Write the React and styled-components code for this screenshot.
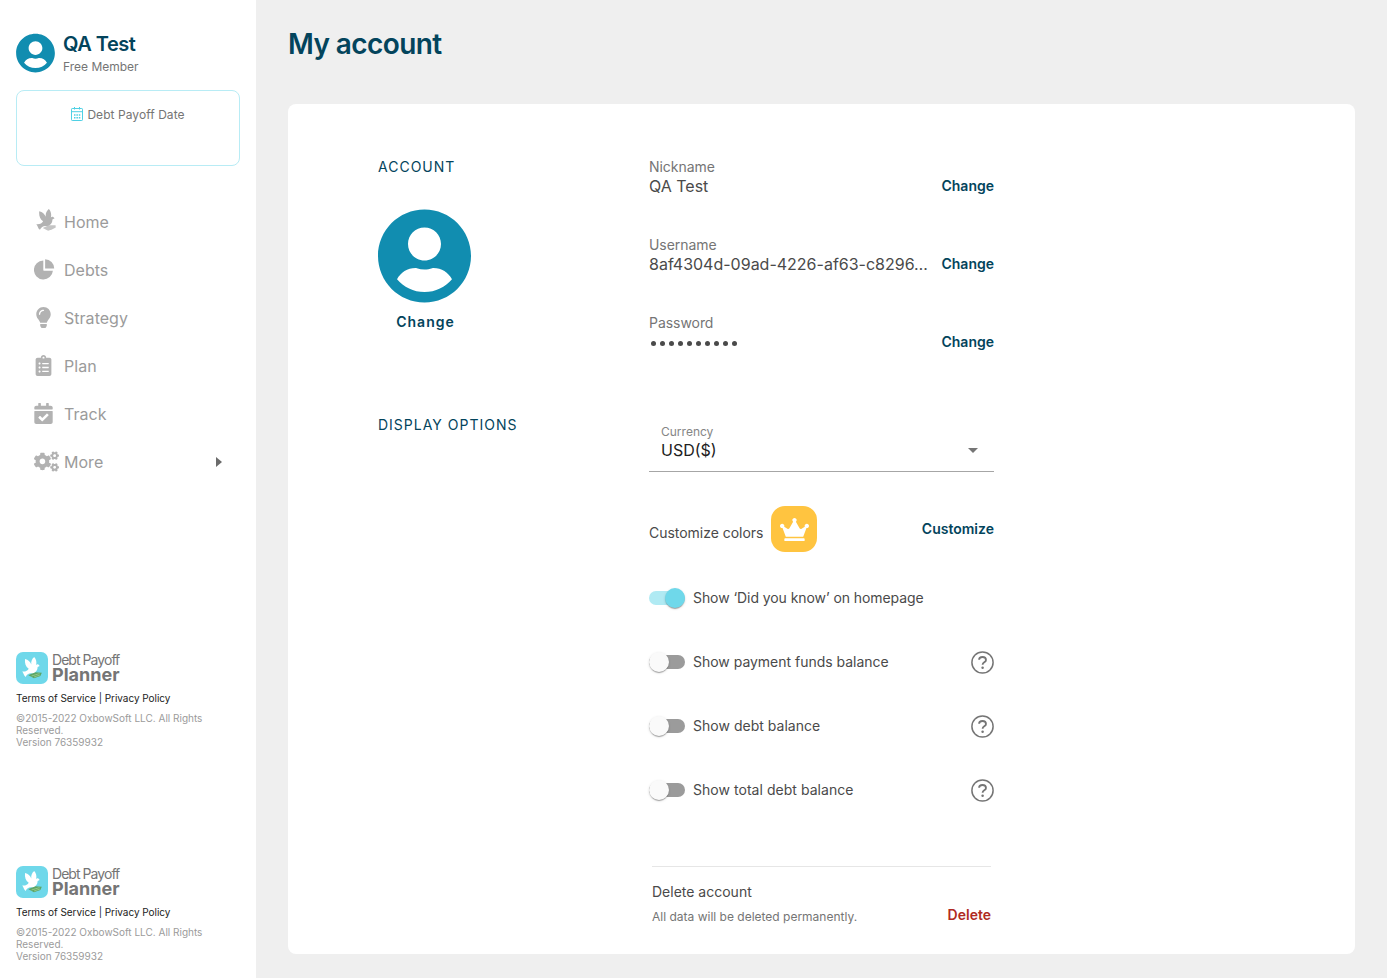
import React from "react";
import styled, { createGlobalStyle } from "styled-components";
import {
  FaUserCircle, FaLightbulb, FaClipboardList, FaCalendarCheck, FaCogs, FaCrown,
} from "react-icons/fa";

const Global = createGlobalStyle`
  * { box-sizing: border-box; }
  body { margin: 0; background: #efefef; font-family: Inter, "Liberation Sans", sans-serif; }
  button { font-family: inherit; border: 0; background: none; padding: 0; cursor: pointer; }
  svg { display: block; flex: none; }
  p, h1, h2 { margin: 0; }
`;

const Page = styled.div`display: flex; height: 978px; overflow: hidden;`;

const Sidebar = styled.aside`
  width: 256px; flex: none; background: #fff; padding: 33px 16px 0;
  display: flex; flex-direction: column;
`;
const Profile = styled.div`
  display: flex; height: 57px; gap: 8px;
  > svg { color: #118db0; width: 39px; height: 40px; }
`;
const ProfileName = styled.div`
  font-size: 20px; line-height: 24px; font-weight: 600; color: #03445c; letter-spacing: -0.5px; margin-top: -1px;
`;
const ProfilePlan = styled.div`font-size: 12px; line-height: 20px; color: #757575; margin-top: 1px;`;
const DateCard = styled.div`
  height: 76px; border: 1px solid #b8ecf5; border-radius: 8px; padding-top: 15px;
  display: flex; justify-content: center; align-items: flex-start; gap: 4px;
  font-size: 12px; line-height: 18px; color: #757575; letter-spacing: 0.06px;
  > svg { margin-top: 1px; }
`;
const Nav = styled.nav`margin-top: 32px; display: flex; flex-direction: column;`;
const NavItem = styled.a`
  height: 48px; display: flex; align-items: center; padding-left: 16px;
  font-size: 16px; color: #9b9b9b; letter-spacing: 0.03px;
`;
const NavIcon = styled.span`
  width: 32px; display: flex; color: #b2b2b2; padding-bottom: ${(p) => p.$lift || 0}px;
  > svg { margin-left: ${(p) => p.$inset}px; }
`;
const NavArrow = styled.span`
  margin-left: auto; margin-right: 18px;
  border-left: 6px solid #6b6b6b; border-top: 5px solid transparent; border-bottom: 5px solid transparent;
`;

const Footer = styled.footer`margin-top: ${(p) => p.$top}px; height: 98px;`;
const Brand = styled.div`display: flex; gap: 4px; height: 32px;`;
const BrandName = styled.div`
  font-size: 14px; line-height: 15px; color: #757575; letter-spacing: -0.95px;
  strong { display: block; font-size: 18px; line-height: 16px; font-weight: 700; letter-spacing: 0; }
`;
const Legal = styled.div`margin-top: 8px; font-size: 10px; line-height: 12px; color: #222; letter-spacing: -0.04px;`;
const Copyright = styled.div`margin-top: 8px; font-size: 10px; line-height: 12px; color: #9b9b9b;`;

const Main = styled.main`flex: 1; padding: 24px 32px;`;
const Title = styled.h1`
  font-size: 28px; line-height: 40px; height: 80px; font-weight: 600; letter-spacing: -0.6px; color: #03445c;
`;
const Card = styled.div`
  background: #fff; border-radius: 8px; height: 850px; padding: 54px 90px 0;
`;
const Section = styled.section`display: flex; height: ${(p) => p.$height}px;`;
const Side = styled.div`width: 271px; flex: none;`;
const Heading = styled.h2`font-size: 14px; line-height: 18px; font-weight: 400; letter-spacing: 1px; color: #03445c;`;
const Avatar = styled.div`
  width: 93px; margin-top: 32px; display: flex; flex-direction: column; align-items: center; gap: 8px;
  > svg { color: #118db0; width: 93px; height: 96px; }
  > button { padding-left: 2px; }
`;
const Action = styled.button`
  font-size: 14px; line-height: 20px; font-weight: 600; letter-spacing: ${(p) => (p.$wide ? "1px" : "0")};
  color: ${(p) => (p.$danger ? "#b02a22" : "#03445c")};
`;
const Fields = styled.div`width: 345px; display: flex; flex-direction: column; gap: ${(p) => p.$gap || 0}px;`;
const Field = styled.div`display: flex; justify-content: space-between; align-items: flex-end; height: 38px;`;
const FieldBody = styled.div`width: 282px;`;
const Label = styled.div`font-size: 14px; line-height: 18px; color: #757575; letter-spacing: -0.05px;`;
const Value = styled.div`font-size: 16px; line-height: 20px; color: #4a4a4a; white-space: nowrap;`;
const Dots = styled.div`display: flex; gap: 4px; padding: 9px 0 6px 2px;`;
const Dot = styled.i`width: 5px; height: 5px; border-radius: 50%; background: #4a4a4a;`;

const Select = styled.div`
  height: 56px; border-bottom: 1px solid #a6a6a6; padding: 9px 16px 0 12px;
  display: flex; justify-content: space-between;
`;
const SelectLabel = styled.div`font-size: 12px; line-height: 14px; color: #858585;`;
const SelectValue = styled.div`font-size: 16px; line-height: 23px; color: #212121;`;
const Caret = styled.span`
  margin-top: 23px; height: 5px;
  border-top: 5px solid #757575; border-left: 5px solid transparent; border-right: 5px solid transparent;
`;
const ColorRow = styled.div`
  display: flex; align-items: center; height: 46px; margin-top: 34px; margin-bottom: 14px;
  font-size: 14px; color: #4a4a4a;
  > button { margin-left: auto; }
`;
const ColorText = styled.span`width: 114px; white-space: nowrap; padding-top: 6px; letter-spacing: -0.03px;`;
const Crown = styled.span`
  width: 46px; height: 46px; border-radius: 14px; background: #ffc440; color: #fff; margin-left: 8px;
  display: grid; place-items: center;
`;
const ToggleRow = styled.div`
  height: 64px; display: flex; align-items: center; font-size: 14px; color: #4a4a4a;
  > svg { margin-left: auto; }
`;
const ToggleText = styled.span`padding-bottom: 2px; letter-spacing: ${(p) => p.$spacing}px;`;
const Track = styled.span`
  width: 36px; height: 14px; border-radius: 7px; margin-right: 8px; display: flex; align-items: center;
  justify-content: ${(p) => (p.$on ? "flex-end" : "flex-start")};
  background: ${(p) => (p.$on ? "#b0eaf3" : "#9b9b9b")};
`;
const Thumb = styled.span`
  width: 20px; height: 20px; flex: none; border-radius: 50%; background: ${(p) => (p.$on ? "#6fd8ea" : "#fafafa")};
  box-shadow: 0 2px 1px -1px rgba(0,0,0,.2), 0 1px 1px rgba(0,0,0,.14), 0 1px 3px rgba(0,0,0,.12);
`;
const DeleteBox = styled.div`
  margin: 44px 3px 0; border-top: 1px solid #e6e6e6; padding-top: 15px;
  display: flex; justify-content: space-between;
  > button { align-self: flex-start; margin-top: 23px; }
`;
const DeleteTitle = styled.div`font-size: 14px; line-height: 20px; color: #4a4a4a;`;
const DeleteNote = styled.div`font-size: 12px; line-height: 18px; margin-top: 6px; color: #757575;`;

const BIRD = "M9 7C8.6 11.2 9.6 14.6 12.7 16.7 11.6 18.8 9.6 19.8 6.2 19.5 7.6 20.8 7.7 23.6 9.7 24.9 10.8 22.6 12.4 21.3 15 21.3 19.4 21.2 21.6 18.6 21.6 14.9L23.7 13.9 22.4 12.6C21.7 12.1 20.7 12.3 20.1 13 20.9 10 20.2 7.2 18.2 4.9 15.8 6.9 14.9 9.4 15.3 12.4 14.2 9.8 12.2 7.6 9 7Z";

const Logo = () => (
  <svg width="32" height="32" viewBox="0 0 32 32">
    <rect width="32" height="32" rx="7" fill="#6fd8ea" />
    <path d="M12.4 23.2 18.5 20.3 25.8 20.8 24.4 24 18 26.2Z" fill="#5da565" />
    <path d="M15.5 24 23.5 21.6M18 25 24 23" stroke="#9bcf8e" strokeWidth=".8" fill="none" />
    <path d={BIRD} fill="#fff" />
  </svg>
);
const HomeIcon = () => (
  <svg width="23" height="26" viewBox="4 5 22 24.8">
    <path d="M12.4 23.2 18 20.6 24.6 20.4 24.8 22.6 21.6 24.4 17.5 25.8Z" fill="#c4c4c4" />
    <path d={BIRD} fill="currentColor" />
  </svg>
);
const PieIcon = () => (
  <svg width="21" height="21" viewBox="0 0 21 21" fill="currentColor">
    <path d="M9.3 1.4A9.5 9.5 0 1 0 18.9 11.7H9.9a.6.6 0 0 1-.6-.6Z" />
    <path d="M11.1.3a9.1 9.1 0 0 1 9.1 9.2h-9.1Z" />
  </svg>
);
const CalendarIcon = () => (
  <svg width="12" height="14" viewBox="0 0 12 14" fill="none" stroke="#4fd0e4">
    <rect x=".5" y="1.5" width="11" height="12" rx=".7" />
    <path d="M.5 4.7h11M3.5 0v2.5M8.5 0v2.5" />
    <path d="M3 8h1.5m.9 0h1.5m.9 0h1.5M3 10.7h1.5m.9 0h1.5m.9 0h1.5" strokeWidth="1.6" />
  </svg>
);
const HelpIcon = () => (
  <svg width="23" height="23" viewBox="0 0 23 23" fill="none" stroke="#757575" strokeWidth="1.5">
    <circle cx="11.5" cy="11.5" r="10.6" />
    <path d="M8.1 8.8C8.1 7 9.6 6 11.5 6s3.5 1 3.5 2.9c0 2.5-3.4 2.4-3.4 4.8" strokeWidth="1.8" />
    <circle cx="11.6" cy="16.7" r="1.25" fill="#757575" stroke="none" />
  </svg>
);

const nav = [
  ["Home", <HomeIcon />, 2, 0],
  ["Debts", <PieIcon />, 2, 1],
  ["Strategy", <FaLightbulb size={21} />, -0.5 + 1, 1],
  ["Plan", <FaClipboardList size={21} />, 0.5, 1],
  ["Track", <FaCalendarCheck size={21} />, 0.5, 1],
  ["More", <FaCogs size={25} />, 2, 1],
];

const BrandFooter = ({ top }) => (
  <Footer $top={top}>
    <Brand>
      <Logo />
      <BrandName>Debt Payoff<strong>Planner</strong></BrandName>
    </Brand>
    <Legal>Terms of Service | Privacy Policy</Legal>
    <Copyright>©2015-2022 OxbowSoft LLC. All Rights Reserved.<br />Version 76359932</Copyright>
  </Footer>
);

const Toggle = ({ on, help, spacing = 0, children }) => (
  <ToggleRow>
    <Track $on={on}><Thumb $on={on} /></Track>
    <ToggleText $spacing={spacing}>{children}</ToggleText>
    {help && <HelpIcon />}
  </ToggleRow>
);

export default function App() {
  return (
    <Page>
      <Global />
      <Sidebar>
        <Profile>
          <FaUserCircle />
          <div>
            <ProfileName>QA Test</ProfileName>
            <ProfilePlan>Free Member</ProfilePlan>
          </div>
        </Profile>
        <DateCard><CalendarIcon />Debt Payoff Date</DateCard>
        <Nav>
          {nav.map(([name, icon, inset, lift]) => (
            <NavItem key={name}>
              <NavIcon $inset={inset} $lift={lift}>{icon}</NavIcon>
              {name}
              {name === "More" && <NavArrow />}
            </NavItem>
          ))}
        </Nav>
        <BrandFooter top={166} />
        <BrandFooter top={116} />
      </Sidebar>
      <Main>
        <Title>My account</Title>
        <Card>
          <Section $height={258}>
            <Side>
              <Heading>ACCOUNT</Heading>
              <Avatar><FaUserCircle /><Action $wide>Change</Action></Avatar>
            </Side>
            <Fields $gap={40}>
              <Field>
                <FieldBody><Label>Nickname</Label><Value>QA Test</Value></FieldBody>
                <Action>Change</Action>
              </Field>
              <Field>
                <FieldBody><Label>Username</Label><Value>8af4304d-09ad-4226-af63-c8296…</Value></FieldBody>
                <Action>Change</Action>
              </Field>
              <Field>
                <FieldBody>
                  <Label>Password</Label>
                  <Dots>{Array.from({ length: 10 }, (_, i) => <Dot key={i} />)}</Dots>
                </FieldBody>
                <Action>Change</Action>
              </Field>
            </Fields>
          </Section>
          <Section>
            <Side><Heading>DISPLAY OPTIONS</Heading></Side>
            <Fields>
              <Select>
                <div><SelectLabel>Currency</SelectLabel><SelectValue>USD($)</SelectValue></div>
                <Caret />
              </Select>
              <ColorRow>
                <ColorText>Customize colors</ColorText>
                <Crown><FaCrown size={29} /></Crown>
                <Action>Customize</Action>
              </ColorRow>
              <Toggle on spacing={-0.07}>Show ‘Did you know’ on homepage</Toggle>
              <Toggle help spacing={-0.02}>Show payment funds balance</Toggle>
              <Toggle help spacing={0.02}>Show debt balance</Toggle>
              <Toggle help spacing={0.04}>Show total debt balance</Toggle>
              <DeleteBox>
                <div>
                  <DeleteTitle>Delete account</DeleteTitle>
                  <DeleteNote>All data will be deleted permanently.</DeleteNote>
                </div>
                <Action $danger>Delete</Action>
              </DeleteBox>
            </Fields>
          </Section>
        </Card>
      </Main>
    </Page>
  );
}
